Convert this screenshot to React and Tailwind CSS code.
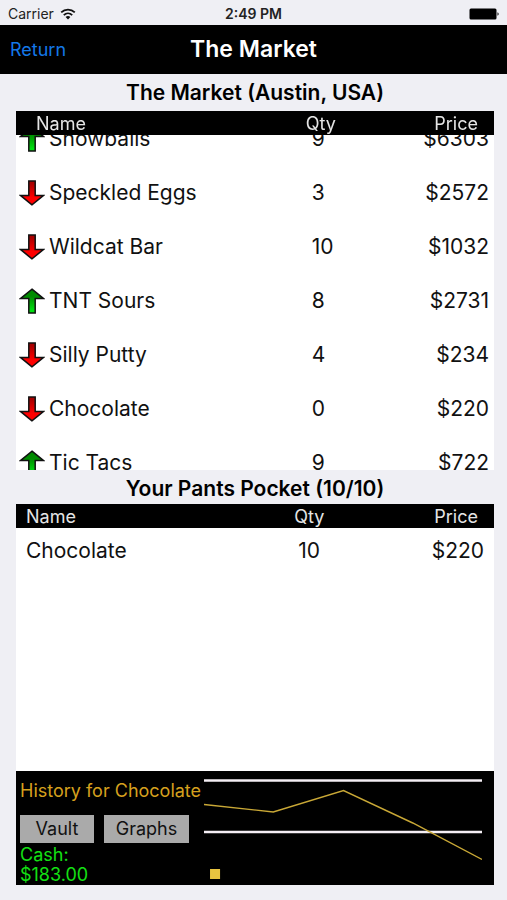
import { useEffect, useRef } from "react";

const marketItems = [
  { name: "Snowballs", qty: 9, price: 6303, trend: "up" },
  { name: "Speckled Eggs", qty: 3, price: 2572, trend: "down" },
  { name: "Wildcat Bar", qty: 10, price: 1032, trend: "down" },
  { name: "TNT Sours", qty: 8, price: 2731, trend: "up" },
  { name: "Silly Putty", qty: 4, price: 234, trend: "down" },
  { name: "Chocolate", qty: 0, price: 220, trend: "down" },
  { name: "Tic Tacs", qty: 9, price: 722, trend: "up" },
];

const pocketItems = [{ name: "Chocolate", qty: 10, price: 220 }];

function TrendArrow({ trend }) {
  const up = trend === "up";
  return (
    <svg
      viewBox="0 0 26 26"
      role="img"
      aria-label={up ? "Price up" : "Price down"}
      className={`w-[26px] h-[26px] shrink-0 ${up ? "" : "rotate-180"}`}
    >
      <defs>
        <linearGradient id="arrow-up" x1="0" y1="0" x2="0" y2="1">
          <stop offset="0.3" stopColor="#008a00" />
          <stop offset="0.9" stopColor="#00e010" />
        </linearGradient>
        <linearGradient id="arrow-down" x1="0" y1="0" x2="0" y2="1">
          <stop offset="0.3" stopColor="#ff0000" />
          <stop offset="0.9" stopColor="#a80000" />
        </linearGradient>
      </defs>
      <path
        d="M13 1.2L24.6 10.6H16.2V25H9.8V10.6H1.4Z"
        fill={up ? "url(#arrow-up)" : "url(#arrow-down)"}
        stroke="#111"
        strokeWidth="1.5"
      />
    </svg>
  );
}

function StatusBar() {
  return (
    <div className="h-[25px] shrink-0 grid grid-cols-3 items-center px-2 pt-0.5 text-sm text-[#222]">
      <div className="flex items-center gap-1.5">
        <span>Carrier</span>
        <svg viewBox="0 0 16 12" className="w-4 h-3" fill="none" stroke="#111">
          <path d="M1.2 4.4C5 .7 11 .7 14.8 4.4" strokeWidth="1.8" />
          <path d="M3.8 7.1C6.2 4.8 9.8 4.8 12.2 7.1" strokeWidth="1.8" />
          <path d="M8 11.4L5.6 9C7 7.8 9 7.8 10.4 9Z" fill="#111" stroke="none" />
        </svg>
      </div>
      <span className="text-center font-semibold">2:49 PM</span>
      <svg viewBox="0 0 30 12" className="w-[30px] h-3 justify-self-end">
        <rect x="0.5" y="0.5" width="27" height="11" rx="1.5" fill="#000" />
        <path d="M28.5 4.2C30 4.8 30 7.2 28.5 7.8Z" fill="#000" />
      </svg>
    </div>
  );
}

function Market() {
  const listRef = useRef(null);

  // Open the list part way into the first row
  useEffect(() => {
    listRef.current.scrollTop = 23;
  }, []);

  return (
    <div
      ref={listRef}
      className="flex-[359] min-h-0 overflow-y-auto bg-white [scrollbar-width:none]"
    >
      <table className="w-full table-fixed text-left">
        <thead className="sticky top-0 z-10 bg-black text-[#e5e5e5] text-lg leading-[22px]">
          <tr>
            <th className="w-[60%] p-0 pl-5 pt-0.5 font-normal">Name</th>
            <th className="w-[15%] p-0 pl-[3px] pt-0.5 font-normal">Qty</th>
            <th className="w-[25%] p-0 pr-4 pt-0.5 font-normal text-right">
              Price
            </th>
          </tr>
        </thead>
        <tbody className="text-[21px] leading-6 text-[#111]">
          {marketItems.map((item) => (
            <tr key={item.name} className="h-[54px]">
              <td className="p-0 pl-[3px]">
                <div className="flex items-center gap-1">
                  <TrendArrow trend={item.trend} />
                  <span>{item.name}</span>
                </div>
              </td>
              <td className="p-0 pl-[9px]">{item.qty}</td>
              <td className="p-0 pr-[5px] text-right">${item.price}</td>
            </tr>
          ))}
        </tbody>
      </table>
    </div>
  );
}

function Pocket() {
  return (
    <div className="flex-[267] min-h-0 overflow-y-auto bg-white [scrollbar-width:none]">
      <table className="w-full table-fixed text-left">
        <thead className="bg-black text-[#e5e5e5] text-lg leading-[22px]">
          <tr>
            <th className="w-[58%] p-0 pl-2.5 pt-0.5 font-normal">Name</th>
            <th className="w-[17%] p-0 pl-px pt-0.5 font-normal">Qty</th>
            <th className="w-[25%] p-0 pr-4 pt-0.5 font-normal text-right">
              Price
            </th>
          </tr>
        </thead>
        <tbody className="text-[21px] leading-6 text-[#111]">
          {pocketItems.map((item) => (
            <tr key={item.name} className="h-[46px]">
              <td className="p-0 pl-2.5">{item.name}</td>
              <td className="p-0 pl-[5px]">{item.qty}</td>
              <td className="p-0 pr-2.5 text-right">${item.price}</td>
            </tr>
          ))}
        </tbody>
      </table>
    </div>
  );
}

function HistoryChart() {
  return (
    <svg
      viewBox="0 0 277 114"
      preserveAspectRatio="none"
      className="flex-1 min-w-0 h-[114px]"
    >
      <path d="M0 9.5H277M0 61H277" stroke="#f4eef4" strokeWidth="2.4" />
      <polyline
        points="0,33.5 69,41 139,19.5 208,52 277,88.5"
        fill="none"
        stroke="#c9a836"
        strokeWidth="1.4"
      />
      <rect x="6" y="98" width="10" height="10" fill="#e8c440" />
    </svg>
  );
}

function App() {
  return (
    <div className="h-screen min-h-[600px] flex flex-col bg-[#efeff4] font-[Inter,'Liberation_Sans',sans-serif]">
      <StatusBar />

      <header className="h-[49px] shrink-0 grid grid-cols-[1fr_auto_1fr] items-center px-2.5 bg-black">
        <a href="#" className="text-lg text-[#1478e8]">
          Return
        </a>
        <h1 className="text-[23px] font-semibold text-white">The Market</h1>
      </header>

      <main className="flex-1 min-h-0 flex flex-col pl-4 pr-[13px] pb-[15px]">
        <h2 className="h-[37px] shrink-0 flex items-center justify-center text-[21px] font-semibold text-black">
          The Market (Austin, USA)
        </h2>
        <Market />

        <h2 className="h-[34px] shrink-0 flex items-center justify-center pt-1 text-[21px] font-semibold text-black">
          Your Pants Pocket (10/10)
        </h2>
        <Pocket />

        <section className="shrink-0 flex gap-2 pl-1 pr-3 bg-black">
          <div className="w-44 shrink-0 flex flex-col pt-2">
            <p className="text-lg leading-6 whitespace-nowrap text-[#d6a01e]">
              History for Chocolate
            </p>
            <div className="flex gap-2.5 mt-3">
              <button className="w-[74px] h-7 bg-[#aaa] text-lg leading-7 text-[#111]">
                Vault
              </button>
              <button className="w-[85px] h-7 bg-[#aaa] text-lg leading-7 text-[#111]">
                Graphs
              </button>
            </div>
            <p className="mt-0.5 text-lg leading-5 text-[#14e014]">
              Cash:
              <br />
              $183.00
            </p>
          </div>
          <HistoryChart />
        </section>
      </main>
    </div>
  );
}

export default App;
